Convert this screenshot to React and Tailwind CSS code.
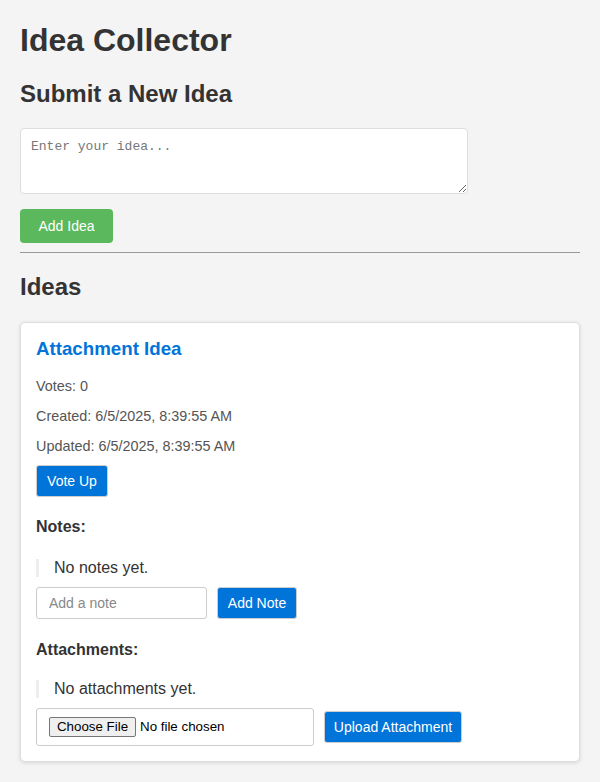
import React from "react";

const sans = { fontFamily: '"Liberation Sans", Arial, sans-serif' };

const NoteRow = ({ children, className }) => (
    <div className={`border-l-[3px] border-[#eee] pl-[15px] text-[16px] leading-[18px] text-[#333] ${className}`}>
        {children}
    </div>
);

const IdeaCard = () => {
    return (
        <div className="mt-[21px] bg-white border border-[#ddd] rounded-[5px] p-[15px] shadow-[0_1px_4px_rgba(0,0,0,0.12)]">
            <h3 className="text-[18.72px] leading-[22px] font-bold text-[#0074d9]">Attachment Idea</h3>
            <p className="mt-[18px] text-[14.4px] leading-4 text-[#555]">Votes: 0</p>
            <p className="mt-[14px] text-[14.4px] leading-4 text-[#555]">Created: 6/5/2025, 8:39:55 AM</p>
            <p className="mt-[14px] text-[14.4px] leading-4 text-[#555]">Updated: 6/5/2025, 8:39:55 AM</p>
            <button className="mt-[11px] h-[32px] w-[72px] bg-[#0074d9] text-white text-[14px] border border-[#ccc] rounded-[3px]">
                Vote Up
            </button>

            <h4 className="mt-[21px] text-[16px] leading-[18px] font-bold text-[#333]">Notes:</h4>
            <NoteRow className="mt-[23px]">No notes yet.</NoteRow>
            <div className="mt-[10px] flex items-center gap-[10px]">
                <input
                    type="text"
                    placeholder="Add a note"
                    className="w-[171px] h-[32px] border border-[#ccc] rounded-[3px] px-[12px] text-[14px] placeholder:text-[#888] outline-none"
                    style={sans}
                />
                <button className="h-[32px] w-[80px] bg-[#0074d9] text-white text-[14px] border border-[#ccc] rounded-[3px]">
                    Add Note
                </button>
            </div>

            <h4 className="mt-[22px] text-[16px] leading-[18px] font-bold text-[#333]">Attachments:</h4>
            <NoteRow className="mt-[21px]">No attachments yet.</NoteRow>
            <div className="mt-[10px] flex items-center gap-[10px]">
                <div className="w-[278px] h-[38px] border border-[#ccc] rounded-[3px] px-[12px] flex items-center text-[13.33px] text-black">
                    <span className="h-[20px] w-[87px] flex items-center justify-center bg-[#efefef] border border-[#767676] rounded-[2px]">
                        Choose File
                    </span>
                    <span className="ml-[4px]">No file chosen</span>
                </div>
                <button className="h-[32px] w-[138px] bg-[#0074d9] text-white text-[14px] border border-[#ccc] rounded-[3px]">
                    Upload Attachment
                </button>
            </div>
        </div>
    );
};

const App = () => {
    return (
        <div className="min-h-screen bg-[#f4f4f4] px-5 pt-[22px] pb-5 text-[#333]" style={sans}>
            <h1 className="text-[32px] leading-[37px] font-bold">Idea Collector</h1>
            <h2 className="mt-[21px] text-[24px] leading-[28px] font-bold">Submit a New Idea</h2>
            <textarea
                placeholder="Enter your idea..."
                className="block mt-[20px] w-[448px] h-[66px] bg-white border border-[#ddd] rounded-[4px] p-[10px] text-[13px] leading-[15px] placeholder:text-[#777] outline-none"
                style={{ fontFamily: '"Liberation Mono", monospace' }}
            />
            <button className="block mt-[15px] h-[34px] w-[93px] bg-[#5cb85c] text-white text-[14px] rounded-[4px]">
                Add Idea
            </button>
            <hr className="mt-[9px] border-t border-[#999]" />
            <h2 className="mt-[20px] text-[24px] leading-[28px] font-bold">Ideas</h2>
            <IdeaCard />
        </div>
    );
};

export default App;
